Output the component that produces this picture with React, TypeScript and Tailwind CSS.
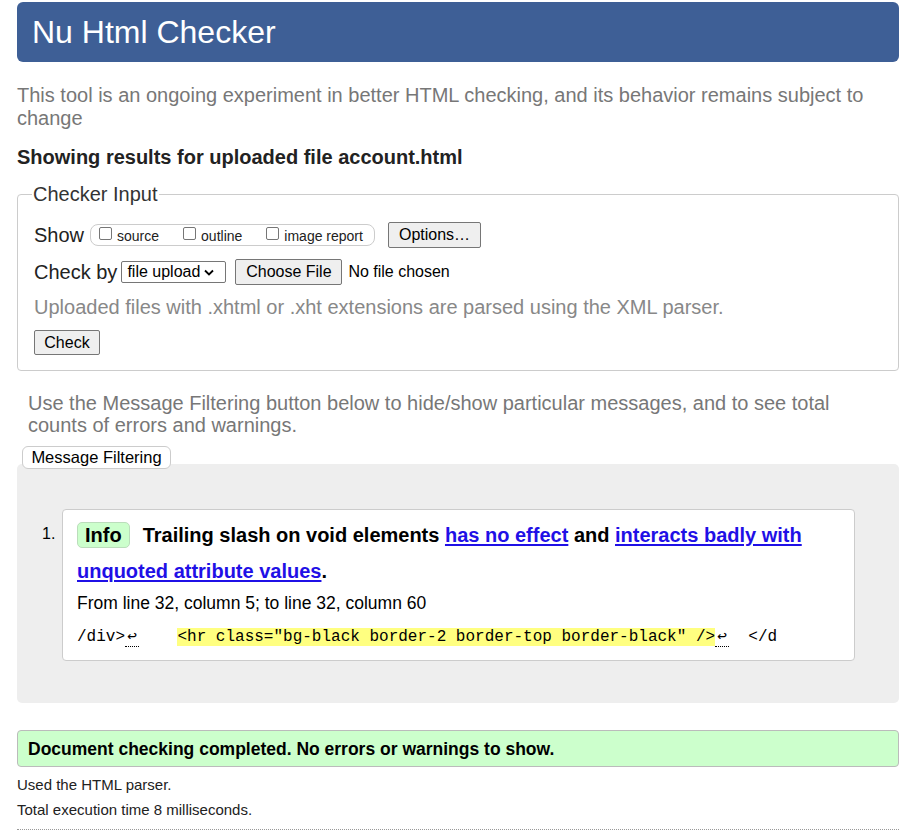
const link = "text-[#1f10e6] underline underline-offset-2";
const ret = "inline-block w-[14px] text-center border-b border-dotted border-black leading-[17px]";

function Checkbox({ label }: { label: string }) {
  return (
    <label className="flex items-center gap-[5px]">
      <span className="w-[13px] h-[13px] border border-[#767676] rounded-[2px] bg-white -mt-[4px]" />
      <span className="mt-[2px]">{label}</span>
    </label>
  );
}

function Btn({ children, className = "" }: { children: React.ReactNode; className?: string }) {
  return (
    <button className={"bg-[#efefef] border border-[#767676] rounded-[2px] text-black leading-none " + className}>
      {children}
    </button>
  );
}

export default function App() {
  return (
    <div className="pl-[17px] pr-[12px] pt-[2px] pb-6 bg-white text-[#222] font-['Liberation_Sans',Arial,sans-serif]">
      <div className="h-[60px] bg-[#3e5f96] rounded-[6px] flex items-center pl-[15px]">
        <h1 className="text-white text-[32px]">Nu Html Checker</h1>
      </div>

      <p className="mt-[22px] text-[20px] leading-[23px] text-[#777]">
        This tool is an ongoing experiment in better HTML checking, and its behavior remains subject to change
      </p>

      <p className="mt-[15px] text-[20px] leading-[24px] font-bold text-[#222]">
        Showing results for uploaded file account.html
      </p>

      <fieldset className="mt-[13px] border border-[#ccc] rounded-[4px] pl-[16px] pr-4 pb-[15px]">
        <legend className="text-[20px] leading-[24px] text-[#333] px-[1px] -ml-[2px]">Checker Input</legend>

        <div className="flex items-center mt-[16px] h-[26px]">
          <span className="text-[20px] text-[#222]">Show</span>
          <div className="ml-[6px] flex items-center h-[22px] w-[285px] border border-[#ccc] rounded-[8px] pl-[8px] text-[14px] gap-[24px]">
            <Checkbox label="source" />
            <Checkbox label="outline" />
            <Checkbox label="image report" />
          </div>
          <Btn className="ml-[13px] h-[26px] w-[93px] text-[16px]">Options…</Btn>
        </div>

        <div className="flex items-center mt-[11px] h-[26px]">
          <span className="text-[20px] text-[#222]">Check by</span>
          <div className="ml-[4px] h-[22px] w-[105px] border border-[#767676] rounded-[2px] flex items-center pl-[5px] text-[16px] text-black">
            <span>file upload</span>
            <svg className="ml-[4px]" width="10" height="7" viewBox="0 0 10 7">
              <path d="M1 1.5l4 4 4-4" fill="none" stroke="#000" strokeWidth="1.8" />
            </svg>
          </div>
          <Btn className="ml-[9px] h-[26px] w-[107px] text-[16px]">Choose File</Btn>
          <span className="ml-[6px] text-[16px] text-black">No file chosen</span>
        </div>

        <p className="mt-[11px] text-[20px] leading-[23px] text-[#888]">
          Uploaded files with .xhtml or .xht extensions are parsed using the XML parser.
        </p>

        <Btn className="mt-[11px] h-[25px] w-[66px] text-[16px]">Check</Btn>
      </fieldset>

      <p className="mt-[21px] ml-[11px] w-[820px] text-[20px] leading-[22px] text-[#777]">
        Use the Message Filtering button below to hide/show particular messages, and to see total counts of errors and warnings.
      </p>

      <div className="mt-[10px]">
        <button className="relative z-10 ml-[5px] h-[23px] w-[149px] bg-white border border-[#ccc] rounded-[6px] text-[16.5px] leading-none text-black">
          Message Filtering
        </button>
        <div className="-mt-[6px] bg-[#eee] rounded-[5px] pl-[25px] pr-[44px] pt-[45px] pb-[42px]">
          <div className="flex">
            <span className="w-[20px] pt-[17px] text-[16px] text-black leading-none">1.</span>
            <div className="flex-1 bg-white border border-[#ccc] rounded-[4px] pl-[14px] pr-4 pt-[12px] pb-[13px]">
              <p className="text-[20px] leading-[36px] font-bold text-black -mt-[5px]">
                <span className="inline-block bg-[#ccffcc] border border-[#bbddbb] rounded-[5px] px-[7px] leading-[24px] mr-[13px]">Info</span>
                Trailing slash on void elements <a className={link} href="#">has no effect</a> and{" "}
                <a className={link} href="#">interacts badly with unquoted attribute values</a>.
              </p>
              <p className="mt-[4px] text-[17.5px] leading-[20px] text-black">From line 32, column 5; to line 32, column 60</p>
              <p className="mt-[14px] font-['Liberation_Mono',monospace] text-[16px] leading-[20px] text-black whitespace-pre">
                /div&gt;<span className={ret}>↩</span>
                {"    "}
                <span className="bg-[#ffff80]">&lt;hr class="bg-black border-2 border-top border-black" /&gt;</span>
                <span className={ret}>↩</span>
                {"  "}&lt;/d
              </p>
            </div>
          </div>
        </div>
      </div>

      <div className="mt-[27px] h-[37px] bg-[#ccffcc] border border-[#bbb] rounded-[4px] flex items-center pl-[10px]">
        <p className="text-[17.5px] font-bold text-black">Document checking completed. No errors or warnings to show.</p>
      </div>

      <p className="mt-[10px] text-[15px] leading-[16px] text-[#222]">Used the HTML parser.</p>
      <p className="mt-[9px] text-[15px] leading-[16px] text-[#222]">Total execution time 8 milliseconds.</p>
      <div className="mt-[11px] border-b border-dotted border-[#999]" />
    </div>
  );
}
